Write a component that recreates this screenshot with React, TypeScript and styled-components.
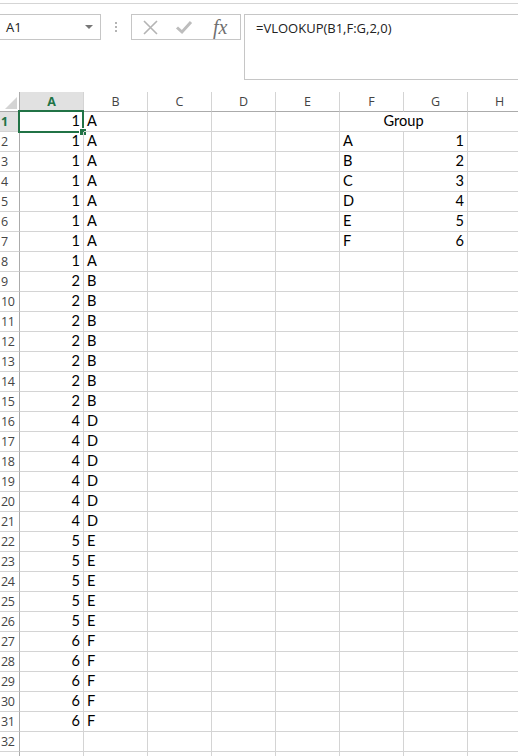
import { createGlobalStyle } from "styled-components";
import styled from "styled-components";

const GlobalStyle = createGlobalStyle`
  html, body {
    margin: 0;
    padding: 0;
    background: #ffffff;
    overflow: hidden;
  }
`;

const GREEN = "#217346";
const GRID = "#d4d4d4";
const HEAD_LINE = "#ababab";

const Page = styled.div`
  width: 518px;
  height: 756px;
  overflow: hidden;
  font-family: "Open Sans", "Liberation Sans", sans-serif;
`;

// formula bar area
const FormulaBar = styled.div`
  margin-top: 3px;
  border-top: 1px solid #d5d5d5;
  height: 85px;
  box-sizing: border-box;
  padding-top: 10px;
  display: flex;
  align-items: flex-start;
`;

const NameBox = styled.div`
  margin-left: -1px;
  width: 102px;
  height: 26px;
  box-sizing: border-box;
  border: 1px solid #c6c6c6;
  display: flex;
  align-items: center;
  justify-content: space-between;
  padding: 0 7px 0 6px;
  font-size: 13px;
  color: #222;
`;

const DropArrow = styled.span`
  width: 0;
  height: 0;
  border-left: 4px solid transparent;
  border-right: 4px solid transparent;
  border-top: 4px solid #777;
`;

const Dots = styled.div`
  width: 30px;
  height: 26px;
  display: flex;
  flex-direction: column;
  align-items: center;
  justify-content: center;
  gap: 2px;

  span {
    width: 2px;
    height: 2px;
    background: #b4b4b4;
  }
`;

const ButtonBox = styled.div`
  width: 110px;
  height: 26px;
  box-sizing: border-box;
  border: 1px solid #c6c6c6;
  display: flex;
  align-items: center;
  padding: 0 8px 0 10px;
  gap: 16px;
`;

const Fx = styled.span`
  margin-left: 4px;
  font-family: "Liberation Serif", "DejaVu Serif", serif;
  font-style: italic;
  font-size: 20px;
  color: #707070;
  line-height: 1;
`;

const FormulaInput = styled.div`
  margin-left: 3px;
  flex: 1;
  height: 66px;
  box-sizing: border-box;
  border: 1px solid #c6c6c6;
  border-right: none;
  padding: 4px 0 0 11px;
  font-size: 13px;
  color: #222;
`;

// sheet grid
const Sheet = styled.div`
  margin-top: 4px;
  display: grid;
  grid-template-columns: 20px repeat(8, 64px);
  grid-auto-rows: 20px;
  font-family: "Lato", "Open Sans", sans-serif;
`;

const Corner = styled.div`
  border-right: 1px solid ${HEAD_LINE};
  border-bottom: 1px solid ${HEAD_LINE};
  display: flex;
  align-items: flex-end;
  justify-content: flex-end;
  padding: 0 2px 2px 0;
  box-sizing: border-box;
`;

const ColHead = styled.div<{ $active?: boolean }>`
  box-sizing: border-box;
  border-right: 1px solid ${GRID};
  border-bottom: ${(p) => (p.$active ? `2px solid ${GREEN}` : `1px solid ${HEAD_LINE}`)};
  background: ${(p) => (p.$active ? "#e1e1e1" : "#ffffff")};
  color: ${(p) => (p.$active ? GREEN : "#444")};
  font-weight: ${(p) => (p.$active ? 700 : 400)};
  font-family: "Open Sans", "Liberation Sans", sans-serif;
  font-size: 12.5px;
  display: flex;
  align-items: center;
  justify-content: center;
  padding-top: ${(p) => (p.$active ? 1 : 0)}px;
`;

const RowHead = styled.div<{ $active?: boolean }>`
  box-sizing: border-box;
  border-right: 1px solid ${HEAD_LINE};
  border-bottom: 1px solid ${GRID};
  background: ${(p) => (p.$active ? "#e1e1e1" : "#ffffff")};
  color: ${(p) => (p.$active ? GREEN : "#444")};
  font-weight: ${(p) => (p.$active ? 700 : 400)};
  font-family: "Open Sans", "Liberation Sans", sans-serif;
  font-size: 12.5px;
  display: flex;
  align-items: center;
  padding-left: 1px;
  letter-spacing: -0.3px;
`;

const Cell = styled.div<{ $align?: "left" | "right" | "center"; $span?: number }>`
  position: relative;
  box-sizing: border-box;
  border-right: 1px solid ${GRID};
  border-bottom: 1px solid ${GRID};
  grid-column: ${(p) => (p.$span ? `span ${p.$span}` : "auto")};
  display: flex;
  align-items: flex-end;
  justify-content: ${(p) =>
    p.$align === "right" ? "flex-end" : p.$align === "center" ? "center" : "flex-start"};
  padding: 0 3px 1px 3px;
  font-size: 14.6px;
  line-height: 18px;
  color: #000;
`;

const Selection = styled.div`
  position: absolute;
  left: -2px;
  top: -2px;
  right: -1px;
  bottom: -2px;
  border: 2px solid ${GREEN};
  pointer-events: none;

  &::after {
    content: "";
    position: absolute;
    right: -5px;
    bottom: -5px;
    width: 6px;
    height: 6px;
    background: ${GREEN};
    border: 1px solid #fff;
  }
`;

const COLS = ["A", "B", "C", "D", "E", "F", "G", "H"];

const colA: number[] = [1, 1, 1, 1, 1, 1, 1, 1, 2, 2, 2, 2, 2, 2, 2, 4, 4, 4, 4, 4, 4, 5, 5, 5, 5, 5, 6, 6, 6, 6, 6];
const letterFor: Record<number, string> = { 1: "A", 2: "B", 4: "D", 5: "E", 6: "F" };
const lookup = ["A", "B", "C", "D", "E", "F"];

function CancelIcon() {
  return (
    <svg width="17" height="17" viewBox="0 0 17 17">
      <path d="M2 2 L15 15 M15 2 L2 15" stroke="#b4b4b4" strokeWidth="1.6" fill="none" />
    </svg>
  );
}

function CheckIcon() {
  return (
    <svg width="18" height="16" viewBox="0 0 18 16">
      <path d="M2 8.5 L7 13 L16 3" stroke="#bdbdbd" strokeWidth="3" fill="none" />
    </svg>
  );
}

function CornerMark() {
  return (
    <svg width="12" height="12" viewBox="0 0 12 12">
      <path d="M12 0 L12 12 L0 12 Z" fill="#d4d4d4" />
    </svg>
  );
}

function renderRow(r: number) {
  const cells = [];
  const val = r <= colA.length ? colA[r - 1] : null;
  cells.push(
    <RowHead key="h" $active={r === 1}>
      {r <= 32 ? r : ""}
    </RowHead>
  );
  cells.push(
    <Cell key="A" $align="right">
      {val}
      {r === 1 && <Selection />}
    </Cell>
  );
  cells.push(<Cell key="B">{val !== null ? letterFor[val] : ""}</Cell>);
  cells.push(<Cell key="C" />);
  cells.push(<Cell key="D" />);
  cells.push(<Cell key="E" />);
  if (r === 1) {
    cells.push(
      <Cell key="FG" $span={2} $align="center">
        Group
      </Cell>
    );
  } else {
    const idx = r - 2;
    const has = idx >= 0 && idx < lookup.length;
    cells.push(<Cell key="F">{has ? lookup[idx] : ""}</Cell>);
    cells.push(
      <Cell key="G" $align="right">
        {has ? idx + 1 : ""}
      </Cell>
    );
  }
  cells.push(<Cell key="H" />);
  return cells;
}

export default function App() {
  const rows = Array.from({ length: 33 }, (_, i) => i + 1);
  return (
    <Page>
      <GlobalStyle />
      <FormulaBar>
        <NameBox>
          <span>A1</span>
          <DropArrow />
        </NameBox>
        <Dots>
          <span />
          <span />
          <span />
        </Dots>
        <ButtonBox>
          <CancelIcon />
          <CheckIcon />
          <Fx>fx</Fx>
        </ButtonBox>
        <FormulaInput>=VLOOKUP(B1,F:G,2,0)</FormulaInput>
      </FormulaBar>
      <Sheet>
        <Corner>
          <CornerMark />
        </Corner>
        {COLS.map((c) => (
          <ColHead key={c} $active={c === "A"}>
            {c}
          </ColHead>
        ))}
        {rows.map((r) => renderRow(r))}
      </Sheet>
    </Page>
  );
}
